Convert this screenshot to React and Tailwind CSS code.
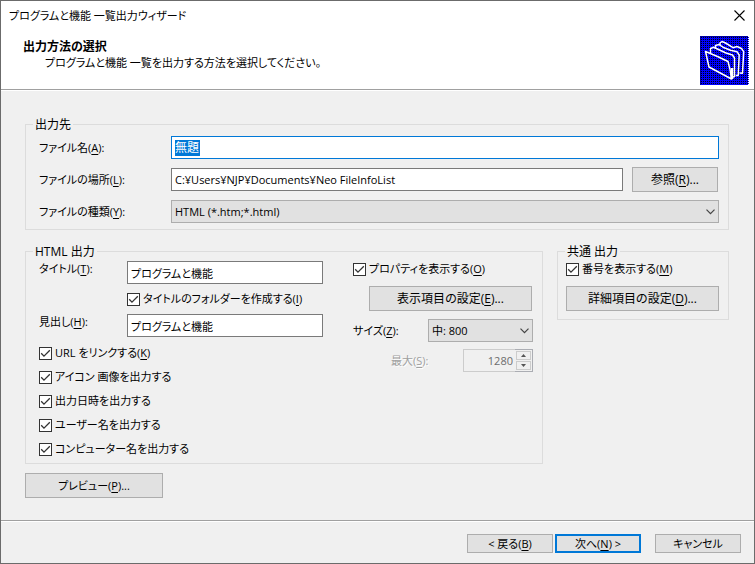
import React from 'react'

const OUTPUT_OPTIONS = [
  { id: 'icon', text: 'アイコン 画像を出力する' },
  { id: 'date', text: '出力日時を出力する' },
  { id: 'user', text: 'ユーザー名を出力する' },
  { id: 'computer', text: 'コンピューター名を出力する' },
]

const FIELD = 'h-[23px] w-full min-w-0 border border-[#7a7a7a] bg-white px-[3px] text-black outline-none'

// every second row of the folder icon's dithered background
const DITHER = Array.from({ length: 24 }, (_, i) => `M1 ${i * 2 + 1.5}h47`).join('')

function Key({ children }) {
  return <span>(<u className="underline underline-offset-2">{children}</u>)</span>
}

function Button({ className = '', border = 'border border-[#adadad]', children }) {
  return (
    <button type="button" className={`flex items-center justify-center whitespace-pre bg-[#e1e1e1] ${border} ${className}`}>
      {children}
    </button>
  )
}

function Check({ id, children, className = '' }) {
  return (
    <div className={`flex h-4 items-center gap-[3px] ${className}`}>
      <span className="relative h-[13px] w-[13px] shrink-0">
        <input id={id} type="checkbox" defaultChecked className="peer block h-[13px] w-[13px] appearance-none border border-[#333] bg-white" />
        <svg viewBox="0 0 13 13" className="pointer-events-none absolute inset-0 hidden h-[13px] w-[13px] peer-checked:block">
          <path d="M2.2 6.3l2.8 2.8 5.8-5.8" fill="none" stroke="#333" strokeWidth="1.3" />
        </svg>
      </span>
      <label htmlFor={id} className="whitespace-nowrap">{children}</label>
    </div>
  )
}

function Select({ id, options, className = '' }) {
  return (
    <div className={`relative ${className}`}>
      <select id={id} className="block h-[23px] w-full appearance-none border border-[#adadad] bg-[#e1e1e1] px-[3px]">
        {options.map((o) => (
          <option key={o}>{o}</option>
        ))}
      </select>
      <svg viewBox="0 0 9 6" className="pointer-events-none absolute right-1 top-[9px] h-[6px] w-[9px]">
        <path d="M.5 .7l4 4 4-4" fill="none" stroke="#444" strokeWidth="1.2" />
      </svg>
    </div>
  )
}

function Spinner({ id, value }) {
  return (
    <div className="flex h-[23px] w-[70px]">
      <input id={id} disabled defaultValue={value} className="w-[52px] border border-r-0 border-[#cccccc] pr-0.5 text-right text-[#6d6d6d]" />
      <div className="flex w-[18px] flex-col justify-between border border-l-0 border-[#abadb3] p-px">
        <button type="button" disabled aria-label="増やす" className="flex h-[9px] items-center justify-center border border-[#cccccc]">
          <svg viewBox="0 0 5 3" className="h-[3px] w-[5px]"><path d="M0 3L2.5 0 5 3z" fill="#555" /></svg>
        </button>
        <button type="button" disabled aria-label="減らす" className="flex h-[9px] items-center justify-center border border-[#cccccc]">
          <svg viewBox="0 0 5 3" className="h-[3px] w-[5px]"><path d="M0 0L2.5 3 5 0z" fill="#555" /></svg>
        </button>
      </div>
    </div>
  )
}

function Group({ title, className = '', bodyClass = '', children }) {
  return (
    <fieldset className={`min-w-0 border border-[#dcdcdc] ${className}`}>
      <legend className="ml-[7px] h-[13px] px-0.5 text-[12px] leading-[13px]">{title}</legend>
      <div className={bodyClass}>{children}</div>
    </fieldset>
  )
}

function FoldersIcon() {
  return (
    <svg viewBox="0 0 49 49" className="h-[49px] w-[49px] shrink-0">
      <rect width="49" height="49" fill="#0000ff" />
      <path d={DITHER} stroke="#000010" strokeDasharray="1 1" />
      <path d="M0 .5h49M.5 0v49" stroke="#0000a0" />
      <path d="M48.5 0v49" stroke="#fff" strokeDasharray="1 1" />
      <g fill="none" stroke="#fff" strokeWidth="1.5" strokeLinejoin="round">
        <path d="M5.5 15.5l12 5 10.5 5 2 8 1.5 9.5L9 31z" />
        <path d="M10.5 17v-4.5l3-1.200 5 2.200 7.5 3.500 6.500 2 2 3v18.500l-3 1" />
        <path d="M15.500 12.500v-3l3.500-1 4 2.700 7.500 3 6.500 1.500 2.200 3.300-1 20.500h-2.500" />
        <path d="M20 9.500v-2.500l2-1.500 3.500 1.500 7.500 4.700 4-1.200 4.500 2 2.200 3.200-1.200 21.500-3-.2" />
        <path d="M32 32v11" strokeWidth="2.500" />
      </g>
    </svg>
  )
}

export default function App() {
  return (
    <main className="flex min-h-screen w-full flex-col border border-[#6b6b6b] bg-[#f0f0f0] font-['Open_Sans','Noto_Sans_CJK_JP',sans-serif] text-[11px] leading-4 text-black [font-feature-settings:'palt']">
      <header className="border-b border-[#a0a0a0] bg-white">
        <div className="flex h-[29px] items-center justify-between pl-2 pr-[9px]">
          <h1>プログラムと機能 一覧出力ウィザード</h1>
          <button type="button" aria-label="閉じる" className="flex h-4 w-3 items-center justify-center">
            <svg viewBox="0 0 11 11" className="h-[11px] w-[11px]">
              <path d="M.5 .5l10 10M10.5 .5l-10 10" stroke="#000" strokeWidth="1.1" />
            </svg>
          </button>
        </div>
        <div className="flex justify-between pb-1 pl-[22px] pr-[5px] pt-[6px]">
          <div className="pt-[3px]">
            <h2 className="text-[12px] font-bold leading-4">出力方法の選択</h2>
            <p className="pl-[22px]">プログラムと機能 一覧を出力する方法を選択してください。</p>
          </div>
          <FoldersIcon />
        </div>
      </header>

      <form className="flex grow flex-col border-t border-white pl-6 pr-[25px] pt-[27px]" onSubmit={(e) => e.preventDefault()}>
        <Group title="出力先" bodyClass="grid grid-cols-[132px_1fr] items-center gap-y-2 pt-[5px] pb-[6px] pl-[13px] pr-[9px]">
          <label htmlFor="name">ファイル名<Key>A</Key>:</label>
          <div className="flex h-[23px] items-center border border-[#0078d7] bg-white px-[3px]">
            <input id="name" defaultValue="無題" className="h-4 w-[25px] bg-[#0078d7] text-[12px] text-white outline-none" />
          </div>
          <label htmlFor="place">ファイルの場所<Key>L</Key>:</label>
          <div className="flex items-center gap-[9px] pr-px">
            <input id="place" defaultValue="C:¥Users¥NJP¥Documents¥Neo FileInfoList" className={FIELD} />
            <Button className="h-[25px] w-[86px] shrink-0 text-[12px]">参照<Key>R</Key>...</Button>
          </div>
          <label htmlFor="kind">ファイルの種類<Key>Y</Key>:</label>
          <Select id="kind" options={['HTML (*.htm;*.html)']} />
        </Group>

        <div className="mt-[15px] flex items-start gap-[14px]">
          <Group title="HTML 出力" className="grow" bodyClass="flex justify-between pt-[3px] pb-[6px] pl-[13px] pr-[9px]">
            <div>
              <div className="grid grid-cols-[88px_196px] gap-y-[7px]">
                <label htmlFor="title">タイトル<Key>T</Key>:</label>
                <input id="title" defaultValue="プログラムと機能" className={FIELD} />
                <Check id="folder" className="col-start-2">タイトルのフォルダーを作成する<Key>I</Key></Check>
                <label htmlFor="heading">見出し<Key>H</Key>:</label>
                <input id="heading" defaultValue="プログラムと機能" className={FIELD} />
              </div>
              <div className="flex flex-col gap-2 pt-2">
                <Check id="url">URL をリンクする<Key>K</Key></Check>
                {OUTPUT_OPTIONS.map((o) => (
                  <Check key={o.id} id={o.id}>{o.text}</Check>
                ))}
              </div>
            </div>
            <div className="w-[180px]">
              <Check id="props">プロパティを表示する<Key>O</Key></Check>
              <Button className="ml-4 mt-[9px] h-[25px] w-[163px] text-[12px]">表示項目の設定<Key>E</Key>...</Button>
              <div className="mt-2 flex items-center justify-between">
                <label htmlFor="size">サイズ<Key>Z</Key>:</label>
                <Select id="size" options={['中: 800']} className="w-[105px]" />
              </div>
              <div className="mt-[7px] flex items-center justify-between pl-[38px]">
                <label htmlFor="max" className="text-[#a0a0a0] [text-shadow:1px_1px_0_#fff]">最大<Key>S</Key>:</label>
                <Spinner id="max" value="1280" />
              </div>
            </div>
          </Group>

          <Group title="共通 出力" className="w-[172px] shrink-0" bodyClass="pt-[3px] pb-2 pl-2 pr-[9px]">
            <Check id="number">番号を表示する<Key>M</Key></Check>
            <Button className="mt-[9px] h-[25px] w-full text-[12px]">詳細項目の設定<Key>D</Key>...</Button>
          </Group>
        </div>

        <Button className="mb-[22px] mt-[9px] h-[25px] w-[138px]">プレビュー<Key>P</Key>...</Button>
      </form>

      <footer className="border-t border-[#a0a0a0]">
        <div className="flex justify-end border-t border-white pb-[10px] pr-[13px] pt-3">
          <Button className="h-[19px] w-[86px]">{'< '}戻る<Key>B</Key></Button>
          <Button className="ml-0.5 h-[19px] w-[86px]" border="border-2 border-[#0078d7]">次へ<Key>N</Key>{' >'}</Button>
          <Button className="ml-[14px] h-[19px] w-[86px]">キャンセル</Button>
        </div>
      </footer>
    </main>
  )
}
